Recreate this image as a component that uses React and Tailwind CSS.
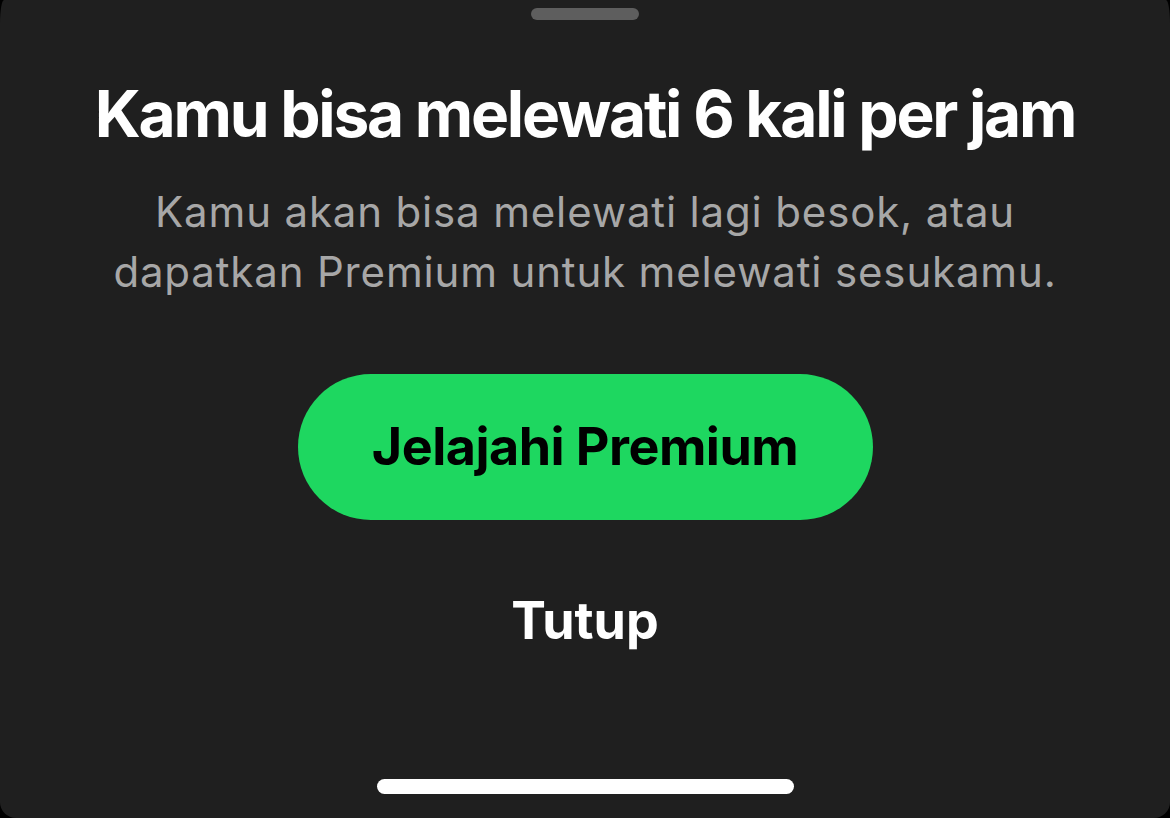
export default function App() {
  return (
    <div className="w-[1170px] h-[818px] bg-black" style={{ fontFamily: "Inter, 'Noto Sans', sans-serif" }}>
      <div className="w-full h-full bg-[#1f1f1f] rounded-tl-[4px_24px] rounded-tr-[4px_24px] rounded-b-[16px] flex flex-col items-center">
        <div className="mt-[8px] w-[108px] h-[12px] rounded-full bg-[#5e5e5e]" />

        <h1 className="mt-[62px] text-[64px] leading-[64px] font-bold text-white tracking-[-0.035em] text-center">
          Kamu bisa melewati 6 kali per jam
        </h1>

        <p className="mt-[36px] text-[42px] leading-[60px] text-[#a7a7a7] tracking-[0.02em] text-center">
          Kamu akan bisa melewati lagi besok, atau
          <br />
          dapatkan Premium untuk melewati sesukamu.
        </p>

        <button className="mt-[72px] w-[575px] h-[146px] rounded-full bg-[#1ed760] text-black text-[52px] font-bold tracking-[-0.01em]">
          Jelajahi Premium
        </button>

        <button className="mt-[75px] text-[52px] leading-[52px] font-bold text-white">Tutup</button>

        <div className="mt-auto mb-[24px] w-[417px] h-[15px] rounded-full bg-white" />
      </div>
    </div>
  );
}
